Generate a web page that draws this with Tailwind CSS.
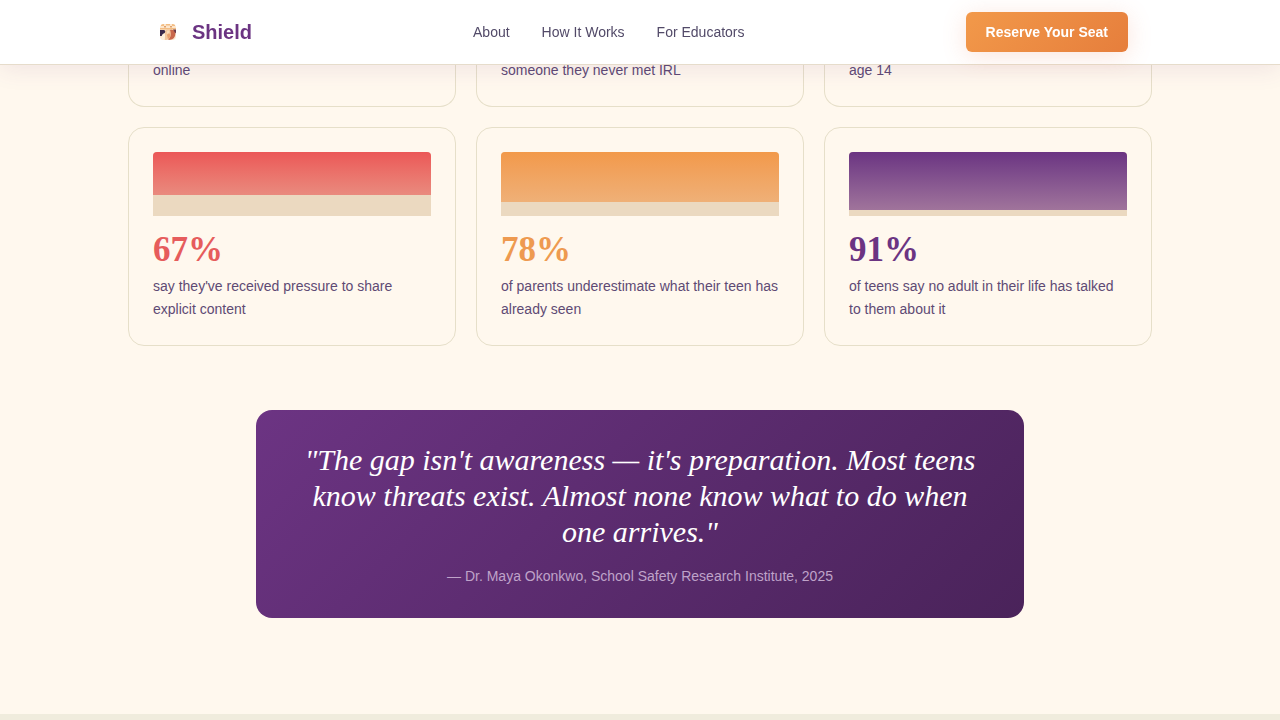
<!DOCTYPE html>
<html lang="en">
<head>
<meta charset="utf-8">
<meta name="viewport" content="width=device-width, initial-scale=1">
<title>Shield</title>
<script src="https://cdn.jsdelivr.net/npm/@tailwindcss/browser@4"></script>
</head>
<body class="bg-[#fff8ee] font-['Liberation_Sans',Arial,sans-serif] text-sm leading-[23px] text-[#5e4a74]">
<header class="fixed inset-x-0 top-0 z-10 border-b border-[#e6dccb] bg-white shadow-[0_4px_24px_rgba(107,52,130,0.1)]">
  <div class="mx-auto flex h-16 max-w-5xl items-center justify-between px-6">
    <a href="#" class="flex items-center gap-2 text-xl font-bold text-[#6b3482]">
      <span class="flex size-8 items-center justify-center">
        <svg class="size-4" viewBox="0 0 16 16" aria-hidden="true">
          <defs><clipPath id="mark"><rect width="16" height="16" rx="4"/></clipPath></defs>
          <g clip-path="url(#mark)">
            <path fill="#fce6cd" d="M0 0h16v16H0z"/>
            <path fill="#f3bd84" d="M1 0h3v2H1zM6 0h4v1.500H6zM12 0h3v2h-3zM0 4h16v1.500H0z"/>
            <path fill="#dfa06c" d="M4 2h2v1.500H4zM10 2h2v1.500h-2z"/>
            <path fill="#3b2a4c" d="M0 6h4c2 1 2 2 1 3-1 0-2 1-3 3H0z"/>
            <path fill="#f3c79d" d="M6 6c4-2 6 1 5 5-1 3-3 5-6 5-1-3-1-7 1-10z"/>
            <path fill="#c9684c" d="M10 6c5-1 6 3 5 6-1 3-4 4-7 4 2-2 4-5 2-10z"/>
            <path fill="#6c3947" d="M13 5.500h3v4c-1-1-2-2-3-4z"/>
            <path fill="#fff1dc" d="M2 11c2-2 3-2 3 0s0 4-1 5H1z"/>
            <path fill="#e9a06d" d="M7 11c1-2 3-2 3 0s0 3-2 4z"/>
            <path fill="#fbdcb8" d="M7 7c2-1 3 0 2 2L7 10z"/>
          </g>
        </svg>
      </span>
      Shield
    </a>
    <nav class="flex gap-8">
      <a href="#about" class="text-[#524a68]">About</a>
      <a href="#how" class="text-[#524a68]">How It Works</a>
      <a href="#educators" class="text-[#524a68]">For Educators</a>
    </nav>
    <button type="button" class="h-10 rounded-md bg-linear-135 from-[#f2994a] to-[#e67e3c] px-5 font-bold text-white shadow-[0_4px_24px_rgba(235,120,80,0.2)]">Reserve Your Seat</button>
  </div>
</header>
<main>
  <section id="about" class="mx-auto max-w-5xl pb-24">
    <div class="grid grid-cols-3 gap-5">
      <p class="rounded-b-2xl border border-t-0 border-[#e6dfc9] px-6 pt-[59px] pb-6">online</p>
      <p class="rounded-b-2xl border border-t-0 border-[#e6dfc9] px-6 pt-[59px] pb-6">someone they never met IRL</p>
      <p class="rounded-b-2xl border border-t-0 border-[#e6dfc9] px-6 pt-[59px] pb-6">age 14</p>

      <article class="rounded-2xl border border-[#e6dfc9] p-6">
        <div class="mb-4 h-16 rounded-t bg-[#ebd9c0]"><div class="rounded-t bg-linear-to-b from-[#eb5757] to-[#e98a7e]" style="height:67%"></div></div>
        <h2 class="mb-2 font-['Liberation_Serif',serif] text-[35px] leading-[35px] font-bold text-[#e65c5c]">67%</h2>
        <p>say they've received pressure to share explicit content</p>
      </article>
      <article class="rounded-2xl border border-[#e6dfc9] p-6">
        <div class="mb-4 h-16 rounded-t bg-[#ebd9c0]"><div class="rounded-t bg-linear-to-b from-[#f2994a] to-[#efb077]" style="height:78%"></div></div>
        <h2 class="mb-2 font-['Liberation_Serif',serif] text-[35px] leading-[35px] font-bold text-[#ee9a50]">78%</h2>
        <p>of parents underestimate what their teen has already seen</p>
      </article>
      <article class="rounded-2xl border border-[#e6dfc9] p-6">
        <div class="mb-4 h-16 rounded-t bg-[#ebd9c0]"><div class="rounded-t bg-linear-to-b from-[#6b3482] to-[#a0749b]" style="height:91%"></div></div>
        <h2 class="mb-2 font-['Liberation_Serif',serif] text-[35px] leading-[35px] font-bold text-[#6b3482]">91%</h2>
        <p>of teens say no adult in their life has talked to them about it</p>
      </article>
    </div>
    <figure class="mx-auto mt-16 max-w-3xl rounded-2xl bg-linear-135 from-[#6c3483] to-[#4a235a] px-12 py-8 text-center">
      <blockquote class="font-['Liberation_Serif',serif] text-3xl leading-9 text-white italic">"The gap isn't awareness — it's preparation. Most teens know threats exist. Almost none know what to do when one arrives."</blockquote>
      <figcaption class="mt-4 leading-5 text-[#bfa3c9]">— Dr. Maya Okonkwo, School Safety Research Institute, 2025</figcaption>
    </figure>
  </section>
  <section id="how" class="h-1.5 bg-[#f0ecdd]"></section>
</main>
</body>
</html>
